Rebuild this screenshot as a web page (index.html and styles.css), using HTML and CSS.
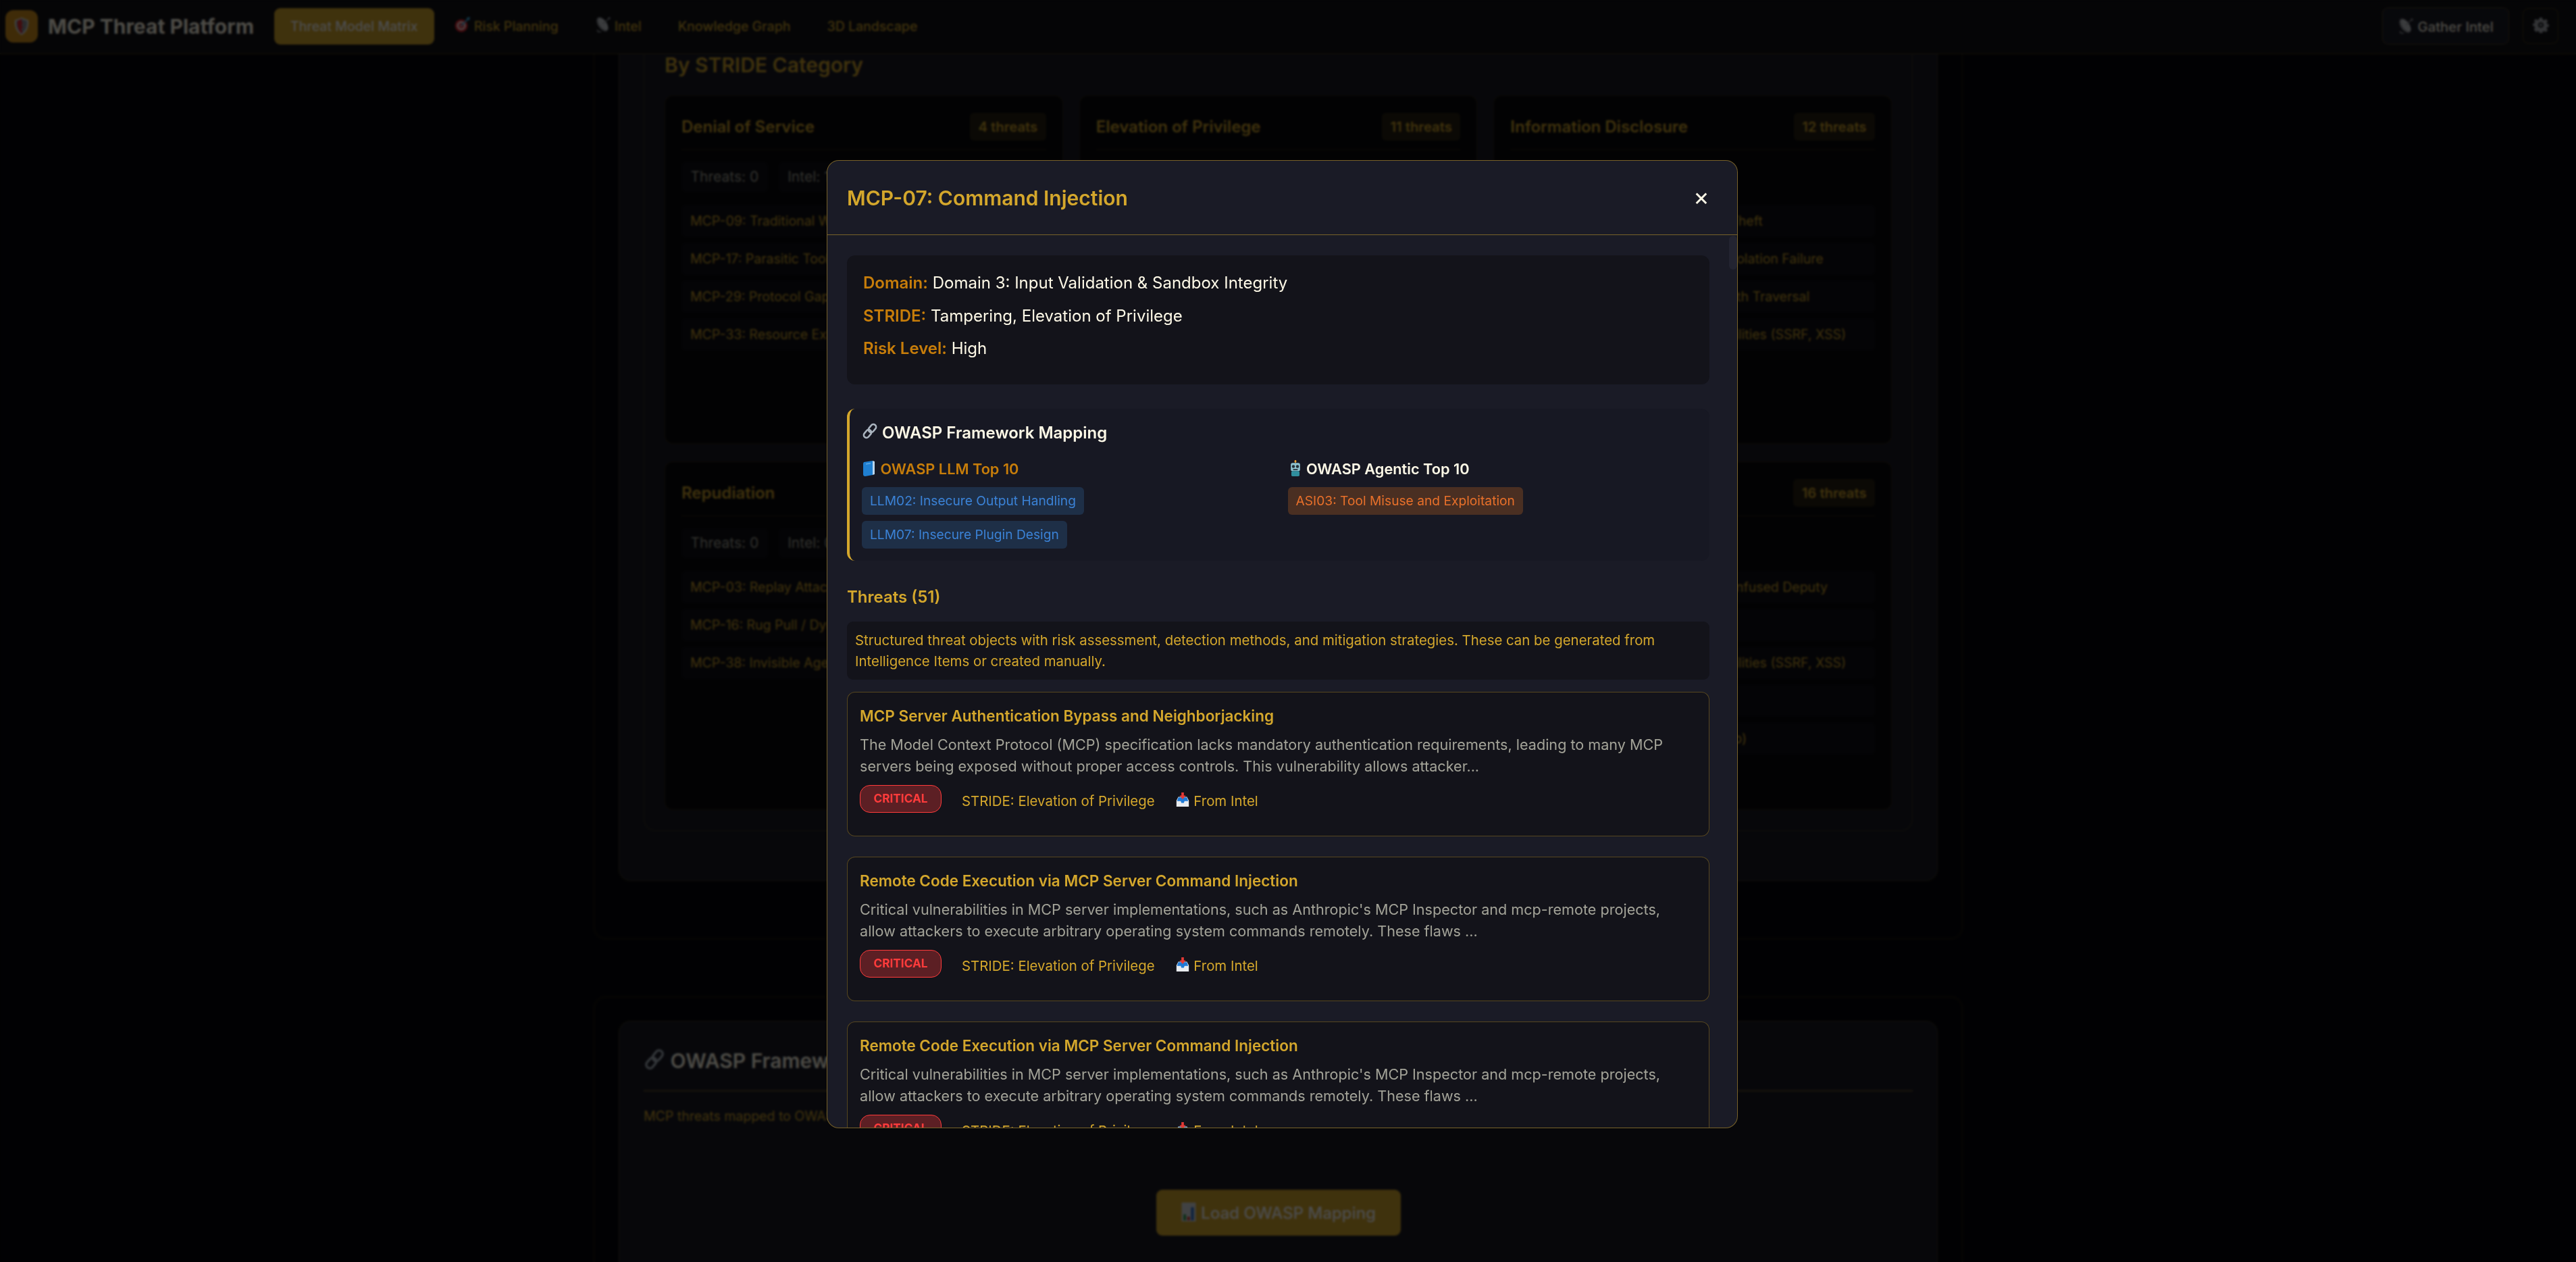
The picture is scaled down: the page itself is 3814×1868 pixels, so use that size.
FILE: index.html
```html
<!DOCTYPE html>
<html lang="en">
<head>
  <meta charset="UTF-8" />
  <title>MCP Threat Platform</title>
  <link rel="stylesheet" href="styles.css">
</head>
<body>
  <svg class="sprites" width="0" height="0">
    <symbol id="i-shield" viewBox="0 0 24 28">
      <path d="M12 1 L22 5 C23 14 20 22 12 27 C4 22 1 14 2 5 Z" fill="#e0e3e8"/>
      <path d="M12 3 L20 6 C21 14 18 20 12 25 C6 20 3 14 4 6 Z" fill="#8a8e95"/>
      <path d="M6 6 L12 3 V8 L14 10 L11 12 L14 15 L11 18 L13 21 L12 25 C8 21 5 14 6 6 Z" fill="#e0262f"/>
    </symbol>
    <symbol id="i-target" viewBox="0 0 24 24">
      <circle cx="10" cy="14" r="9.5" fill="#e0242f"/>
      <circle cx="10" cy="14" r="6.5" fill="#f4f4f4"/>
      <circle cx="10" cy="14" r="4" fill="#e0242f"/>
      <circle cx="10" cy="14" r="1.6" fill="#f4f4f4"/>
      <path d="M10 14 L20 4" stroke="#3aa7d8" stroke-width="2"/>
      <path d="M18 2 L23 1 L22 6 L19 6 L18 5 Z" fill="#3aa7d8"/>
    </symbol>
    <symbol id="i-dish" viewBox="0 0 24 24">
      <path d="M4 20 C3 23 6 24 9 23" stroke="#8b8f95" stroke-width="2" fill="none"/>
      <ellipse cx="11" cy="12" rx="6.500" ry="12" transform="rotate(-35 11 12)" fill="#8d9198"/>
      <ellipse cx="12" cy="11.500" rx="5" ry="10.500" transform="rotate(-35 12 11.500)" fill="#c4c8ce"/>
      <path d="M12 11 L21 3" stroke="#8b8f95" stroke-width="1.400"/>
      <circle cx="21" cy="3" r="1.800" fill="#8b8f95"/>
    </symbol>
    <symbol id="i-gear" viewBox="0 0 24 24">
      <path fill="#a6a9b0" fill-rule="evenodd" d="M10 1h4l.6 3 2.2.9 2.6-1.7 2.8 2.8-1.7 2.6.9 2.2 3 .6v3l-3 .6-.9 2.2 1.7 2.6-2.8 2.8-2.6-1.7-2.2.9-.6 3h-4l-.6-3-2.2-.9-2.6 1.7L1.6 18.6l1.7-2.6-.9-2.2-3-.6v-3l3-.6.9-2.2L1.600 5.800 4.400 3l2.600 1.700 2.200-.9zM12 8a4 4 0 1 0 0 8 4 4 0 0 0 0-8z"/>
      <circle cx="12" cy="12" r="2" fill="#a6a9b0"/>
    </symbol>
    <symbol id="i-link" viewBox="0 0 24 24">
      <g fill="none" stroke="#aab4bf" stroke-width="2.6">
        <rect x="11.500" y="1.500" width="8" height="13" rx="4" transform="rotate(40 15.500 8)"/>
        <rect x="4.500" y="9.500" width="8" height="13" rx="4" transform="rotate(40 8.500 16)"/>
      </g>
    </symbol>
    <symbol id="i-book" viewBox="0 0 20 24">
      <path d="M2 3 L15 1 V22 L4 24 C2 24 1 23 1 21 V5 Z" fill="#1f7fd1"/>
      <path d="M15 1 L18 2 V21 L15 22 Z" fill="#b9d6ee"/>
      <path d="M5 6 L12 5" stroke="#7dbbea" stroke-width="1.200"/>
    </symbol>
    <symbol id="i-robot" viewBox="0 0 20 28">
      <rect x="9" y="0" width="2" height="5" fill="#d98a1f"/>
      <circle cx="10" cy="2" r="1.800" fill="#e8a13a"/>
      <rect x="2" y="5" width="16" height="14" rx="3" fill="#8fc3cf"/>
      <circle cx="6.500" cy="11" r="2.600" fill="#233038"/>
      <circle cx="13.500" cy="11" r="2.600" fill="#233038"/>
      <rect x="6" y="15.500" width="8" height="2" fill="#233038"/>
      <rect x="3" y="19" width="14" height="9" rx="2" fill="#2f8e9e"/>
    </symbol>
    <symbol id="i-inbox" viewBox="0 0 24 24">
      <path d="M2 13 L5 7 H19 L22 13 V23 H2 Z" fill="#e8ebef"/>
      <path d="M5 8 H19 L21 14 H15 L14 17 H10 L9 14 H3 Z" fill="#1f7ad6"/>
      <path d="M10 0 H14 V5 H17 L12 11 L7 5 H10 Z" fill="#e53935"/>
    </symbol>
    <symbol id="i-chart" viewBox="0 0 24 32">
      <rect x="0" y="0" width="24" height="32" fill="#d9dde2"/>
      <rect x="3" y="20" width="4.500" height="10" fill="#2e9e4f"/>
      <rect x="9.500" y="24" width="4.500" height="6" fill="#d9342f"/>
      <rect x="16" y="8" width="4.500" height="22" fill="#2a6fd1"/>
    </symbol>
  </svg>

  <header class="topbar">
    <div class="logo"><svg class="logo-icon"><use href="#i-shield"/></svg></div>
    <div class="brand">MCP Threat Platform</div>
    <nav class="tabs">
      <a class="tab active">Threat Model Matrix</a>
      <a class="tab"><svg class="emoji em-n"><use href="#i-target"/></svg> Risk Planning</a>
      <a class="tab"><svg class="emoji em-n"><use href="#i-dish"/></svg> Intel</a>
      <a class="tab">Knowledge Graph</a>
      <a class="tab">3D Landscape</a>
    </nav>
    <button class="gather"><svg class="emoji em-n"><use href="#i-dish"/></svg> Gather Intel</button>
    <button class="gear"><svg class="gear-icon"><use href="#i-gear"/></svg></button>
  </header>

  <main class="content">
    <section class="panel stride-panel">
      <div class="panel-card">
        <div class="panel-inner">
          <h2 class="section-title">By STRIDE Category</h2>
          <div class="stride-grid">

            <div class="stride-card">
              <div class="stride-head"><h3>Denial of Service</h3><span class="count">4 threats</span></div>
              <div class="stats"><span class="stat">Threats: 0</span><span class="stat">Intel: 1</span></div>
              <div class="item">MCP-09: Traditional Web Vulnerabilities</div>
              <div class="item">MCP-17: Parasitic Toolchain Attacks</div>
              <div class="item">MCP-29: Protocol Gap Exploitation</div>
              <div class="item">MCP-33: Resource Exhaustion</div>
            </div>

            <div class="stride-card">
              <div class="stride-head"><h3>Elevation of Privilege</h3><span class="count">11 threats</span></div>
              <div class="stats"><span class="stat">Threats: 0</span><span class="stat">Intel: 3</span></div>
              <div class="item">MCP-07: Command Injection</div>
              <div class="item">MCP-11: Excessive Permissions</div>
            </div>

            <div class="stride-card">
              <div class="stride-head"><h3>Information Disclosure</h3><span class="count">12 threats</span></div>
              <div class="stats hidden-stats"><span class="stat">Threats: 0</span></div>
              <div class="item">MCP-02: Secrets / API Credential Theft</div>
              <div class="item">MCP-14: Sandboxing / Container Isolation Failure</div>
              <div class="item">MCP-21: Resource Access / File Path Traversal</div>
              <div class="item">MCP-09: Traditional Web Vulnerabilities (SSRF, XSS)</div>
            </div>

            <div class="stride-card">
              <div class="stride-head"><h3>Repudiation</h3><span class="count">3 threats</span></div>
              <div class="stats"><span class="stat">Threats: 0</span><span class="stat">Intel: 0</span></div>
              <div class="item">MCP-03: Replay Attacks</div>
              <div class="item">MCP-16: Rug Pull / Dynamic Behavior</div>
              <div class="item">MCP-38: Invisible Agent Activity</div>
            </div>

            <div class="stride-card">
              <div class="stride-head"><h3>Spoofing</h3><span class="count">5 threats</span></div>
              <div class="stats"><span class="stat">Threats: 0</span><span class="stat">Intel: 0</span></div>
              <div class="item">MCP-01: Identity Spoofing</div>
            </div>

            <div class="stride-card">
              <div class="stride-head"><h3>Tampering</h3><span class="count">16 threats</span></div>
              <div class="stats hidden-stats"><span class="stat">Threats: 0</span></div>
              <div class="item">MCP-11: Agent Privilege Abuse, Confused Deputy</div>
              <div class="item">MCP-07: Command Injection</div>
              <div class="item">MCP-09: Traditional Web Vulnerabilities (SSRF, XSS)</div>
              <div class="item">MCP-25: Tool Poisoning</div>
              <div class="item">MCP-40: Broad Scopes (OAuth App)</div>
            </div>

          </div>
        </div>
      </div>
    </section>

    <section class="panel owasp-panel">
      <div class="panel-card owasp-card">
        <h2 class="owasp-title"><svg class="emoji em-l"><use href="#i-link"/></svg> OWASP Framework Mapping</h2>
        <p class="owasp-text">MCP threats mapped to OWASP LLM Top 10 and OWASP Agentic Top 10 frameworks.</p>
        <div class="load-row">
          <button class="load-btn"><svg class="emoji em-m"><use href="#i-chart"/></svg> Load OWASP Mapping</button>
        </div>
      </div>
    </section>
  </main>

  <div class="overlay">
    <div class="modal">
      <div class="modal-head">
        <h2>MCP-07: Command Injection</h2>
        <span class="close">×</span>
      </div>
      <div class="modal-body">
        <div class="info-box">
          <p><strong>Domain:</strong> Domain 3: Input Validation &amp; Sandbox Integrity</p>
          <p><strong>STRIDE:</strong> Tampering, Elevation of Privilege</p>
          <p><strong>Risk Level:</strong> High</p>
        </div>

        <div class="map-box">
          <h4 class="map-title"><svg class="emoji em-m"><use href="#i-link"/></svg> OWASP Framework Mapping</h4>
          <div class="map-cols">
            <div>
              <h5 class="map-sub llm"><svg class="emoji em-s"><use href="#i-book"/></svg> OWASP LLM Top 10</h5>
              <span class="chip chip-blue">LLM02: Insecure Output Handling</span>
              <span class="chip chip-blue">LLM07: Insecure Plugin Design</span>
            </div>
            <div>
              <h5 class="map-sub agentic"><svg class="emoji em-s"><use href="#i-robot"/></svg> OWASP Agentic Top 10</h5>
              <span class="chip chip-orange">ASI03: Tool Misuse and Exploitation</span>
            </div>
          </div>
        </div>

        <h3 class="threats-title">Threats (51)</h3>
        <div class="note">Structured threat objects with risk assessment, detection methods, and mitigation strategies. These can be generated from Intelligence Items or created manually.</div>

        <div class="threat">
          <h4>MCP Server Authentication Bypass and Neighborjacking</h4>
          <p>The Model Context Protocol (MCP) specification lacks mandatory authentication requirements, leading to many MCP servers being exposed without proper access controls. This vulnerability allows attacker...</p>
          <div class="meta">
            <span class="critical">CRITICAL</span>
            <span>STRIDE: Elevation of Privilege</span>
            <span class="from"><svg class="emoji em-s"><use href="#i-inbox"/></svg> From Intel</span>
          </div>
        </div>

        <div class="threat">
          <h4>Remote Code Execution via MCP Server Command Injection</h4>
          <p>Critical vulnerabilities in MCP server implementations, such as Anthropic's MCP Inspector and mcp-remote projects, allow attackers to execute arbitrary operating system commands remotely. These flaws ...</p>
          <div class="meta">
            <span class="critical">CRITICAL</span>
            <span>STRIDE: Elevation of Privilege</span>
            <span class="from"><svg class="emoji em-s"><use href="#i-inbox"/></svg> From Intel</span>
          </div>
        </div>

        <div class="threat">
          <h4>Remote Code Execution via MCP Server Command Injection</h4>
          <p>Critical vulnerabilities in MCP server implementations, such as Anthropic's MCP Inspector and mcp-remote projects, allow attackers to execute arbitrary operating system commands remotely. These flaws ...</p>
          <div class="meta">
            <span class="critical">CRITICAL</span>
            <span>STRIDE: Elevation of Privilege</span>
            <span class="from"><svg class="emoji em-s"><use href="#i-inbox"/></svg> From Intel</span>
          </div>
        </div>
      </div>
      <div class="scroll-thumb"></div>
    </div>
  </div>
</body>
</html>
```

FILE: styles.css
```css
* {
  box-sizing: border-box;
}

body {
  margin: 0;
  height: 100vh;
  overflow: hidden;
  background-color: #06060a;
  color: #fef9e7;
  font-family: Inter, "Noto Sans", sans-serif;
  display: flex;
  flex-direction: column;
}

.sprites {
  position: absolute;
}

.emoji {
  display: inline-block;
  vertical-align: -0.15em;
}

.em-n { width: 24px; height: 24px; }
.em-s { width: 22px; height: 24px; }
.em-m { width: 24px; height: 28px; }
.em-l { width: 32px; height: 36px; }

/* top bar */
.topbar {
  height: 80px;
  flex: none;
  display: flex;
  align-items: center;
  padding: 0 26px 2px 8px;
  background-color: #111116;
  border-bottom: 1.5px solid rgba(212, 167, 44, 0.3);
  position: relative;
  z-index: 2;
}

.logo {
  width: 48px;
  height: 48px;
  border-radius: 12px;
  background-color: #d4921c;
  display: flex;
  align-items: center;
  justify-content: center;
  margin-right: 15px;
}

.logo-icon {
  width: 24px;
  height: 28px;
}

.brand {
  font-size: 30px;
  font-weight: 700;
  margin-right: 30px;
  white-space: nowrap;
}

.tabs {
  display: flex;
  gap: 6px;
}

.tab {
  padding: 0 24px;
  height: 54px;
  line-height: 54px;
  border-radius: 9px;
  font-size: 19.5px;
  font-weight: 500;
  color: #d4a72c;
  white-space: nowrap;
}

.tab.active {
  background-color: #d4a72c;
  color: #fff;
}

.gather {
  margin-left: auto;
  height: 55px;
  width: 188px;
  padding: 0;
  font: 500 20.25px Inter, sans-serif;
  color: #fef9e7;
  background-color: #1a1b26;
  border: 1.5px solid rgba(212, 167, 44, 0.3);
  border-radius: 9px;
}

.gear {
  margin-left: 20px;
  width: 53px;
  height: 53px;
  padding: 0;
  background: none;
  border: 1.5px solid rgba(212, 167, 44, 0.3);
  border-radius: 9px;
}

.gear-icon {
  width: 24px;
  height: 24px;
  display: block;
  margin: 0 auto 4px;
}

/* page behind the modal */
.content {
  flex: 1;
  overflow: hidden;
}

.panel {
  width: 2027px;
  margin-left: 879px;
  border: 1.5px solid rgba(212, 167, 44, 0.2);
  border-radius: 18px;
  padding: 0 36px;
}

.stride-panel {
  margin-top: -20px;
  padding-bottom: 85px;
}

.owasp-panel {
  margin-top: 85px;
  padding-top: 35px;
  height: 600px;
}

.panel-card {
  background-color: #181924;
  border: 1.5px solid rgba(212, 167, 44, 0.2);
  border-radius: 18px;
  padding: 0 36px 73px;
}

.panel-inner {
  border: 1.5px solid rgba(212, 167, 44, 0.2);
  border-top: 0;
  border-radius: 0 0 18px 18px;
  padding: 12px 30px 30px;
}

.section-title {
  margin: 0 0 22px;
  font-size: 30px;
  font-weight: 600;
  line-height: 45px;
  color: #d4a72c;
}

.stride-grid {
  display: grid;
  grid-template-columns: repeat(3, 1fr);
  gap: 26px 24px;
}

.stride-card {
  height: 516px;
  padding: 24px;
  background-color: #08080c;
  border: 1.5px solid rgba(212, 167, 44, 0.2);
  border-radius: 12px;
}

.stride-head {
  display: flex;
  align-items: center;
  justify-content: space-between;
  height: 56px;
  padding-bottom: 12px;
  border-bottom: 1.5px solid rgba(212, 167, 44, 0.2);
  margin-bottom: 18px;
}

.stride-head h3 {
  margin: 0;
  font-size: 24px;
  font-weight: 600;
  color: #d4a72c;
}

.count {
  padding: 8px 12.5px;
  border-radius: 6px;
  background-color: rgba(212, 167, 44, 0.15);
  font-size: 20.25px;
  font-weight: 600;
  color: #d4a72c;
}

.stats {
  display: flex;
  gap: 16px;
  margin-bottom: 19px;
}

.stat {
  padding: 8px 13.5px;
  font-size: 21px;
  line-height: 28px;
  color: #a3a398;
  border-radius: 6px;
  background-color: #0e0e14;
}

.hidden-stats {
  visibility: hidden;
}

.item {
  padding: 9px 13px;
  margin-bottom: 8px;
  font-size: 19.5px;
  line-height: 30px;
  color: #d4a72c;
  white-space: nowrap;
  border-radius: 6px;
  background-color: #0e0e14;
}

.owasp-card {
  height: 400px;
  padding: 36px;
}

.owasp-title {
  margin: 0;
  height: 68px;
  font-size: 30px;
  font-weight: 600;
  line-height: 44px;
  border-bottom: 3px solid rgba(212, 167, 44, 0.25);
}

.owasp-text {
  margin: 24px 0 0;
  font-size: 19.5px;
  color: #d4a72c;
}

.load-row {
  display: flex;
  justify-content: center;
  margin-top: 97px;
}

.load-btn {
  width: 362px;
  height: 68px;
  font: 500 24px Inter, sans-serif;
  color: #fff;
  background-color: #d4a72c;
  border: 0;
  border-radius: 9px;
}

/* modal */
.overlay {
  position: fixed;
  inset: 0;
  z-index: 5;
  background-color: rgba(0, 0, 0, 0.7);
  backdrop-filter: blur(1.5px);
}

.modal {
  position: absolute;
  left: 1224px;
  top: 237px;
  width: 1349px;
  height: 1433px;
  display: flex;
  flex-direction: column;
  overflow: hidden;
  background-color: #1a1b26;
  border: 1.5px solid rgba(212, 167, 44, 0.5);
  border-radius: 18px;
}

.modal-head {
  flex: none;
  height: 110px;
  display: flex;
  align-items: center;
  justify-content: space-between;
  padding: 0 35px 0 29px;
  border-bottom: 1.5px solid rgba(212, 167, 44, 0.5);
}

.modal-head h2 {
  margin: 0;
  font-size: 30px;
  font-weight: 600;
  color: #d4a72c;
}

.close {
  font-size: 36px;
  line-height: 36px;
  width: 36px;
  text-align: center;
  color: #fef9e7;
  margin: 0 0 4px;
}

.modal-body {
  flex: 1;
  overflow: hidden;
  padding: 30px 41px 0 29px;
}

.scroll-thumb {
  position: absolute;
  right: 0;
  top: 111px;
  width: 12px;
  height: 50px;
  border-radius: 6px;
  background-color: #232431;
}

.info-box {
  padding: 23px 24px 22px;
  background-color: #13131a;
  border-radius: 12px;
}

.info-box p {
  margin: 0 0 12.5px;
  font-size: 24px;
  line-height: 36px;
}

.info-box strong {
  font-weight: 600;
  color: #c77d0a;
}

.map-box {
  margin-top: 36px;
  padding: 18px;
  background-color: #171823;
  border-left: 4.5px solid #d4a72c;
  border-radius: 12px;
}

.map-title {
  margin: 0 0 19px;
  font-size: 24px;
  font-weight: 600;
  line-height: 36px;
}

.map-cols {
  display: grid;
  grid-template-columns: 1fr 1fr;
  gap: 24px;
}

.map-sub {
  margin: 0 0 11px;
  font-size: 21.75px;
  font-weight: 600;
  line-height: 32px;
}

.llm { color: #c77d0a; }
.agentic { color: #fef9e7; }

.chip {
  display: table;
  padding: 0 12px;
  height: 41px;
  line-height: 41px;
  margin-bottom: 9px;
  border-radius: 6px;
  font-size: 19.2px;
}

.chip:last-child {
  margin-bottom: 0;
}

.chip-blue {
  background-color: #1e2f47;
  color: #3b82d6;
}

.chip-orange {
  background-color: #4a2f22;
  color: #e8702a;
}

.threats-title {
  margin: 36px 0 18px;
  font-size: 24px;
  font-weight: 600;
  line-height: 36px;
  color: #d4a72c;
}

.note {
  padding: 12px;
  background-color: #13131a;
  border-radius: 9px;
  font-size: 20.4px;
  line-height: 31.2px;
  color: #d4a72c;
}

.threat {
  height: 214px;
  margin-top: 18px;
  margin-bottom: 30px;
  padding: 19px 18px;
  background-color: #13131a;
  border: 1.5px solid rgba(212, 167, 44, 0.35);
  border-radius: 12px;
}

.threat + .threat {
  margin-top: 0;
}

.threat h4 {
  margin: 0 0 11px;
  font-size: 22.5px;
  font-weight: 600;
  line-height: 31.5px;
  color: #d4a72c;
}

.threat p {
  margin: 0 0 12px;
  font-size: 21.6px;
  line-height: 32px;
  color: #a3a398;
}

.meta {
  display: flex;
  align-items: center;
  gap: 30px;
  font-size: 20.4px;
  color: #d4a72c;
}

.meta span {
  white-space: nowrap;
  padding-top: 5px;
}

.meta .critical {
  width: 121px;
  height: 41px;
  line-height: 38px;
  padding: 0;
  text-align: center;
  font-size: 17.25px;
  font-weight: 700;
  color: #ff3b3b;
  background-color: #5c1f24;
  border: 1.5px solid #ff3b3b;
  border-radius: 15px;
}
```
